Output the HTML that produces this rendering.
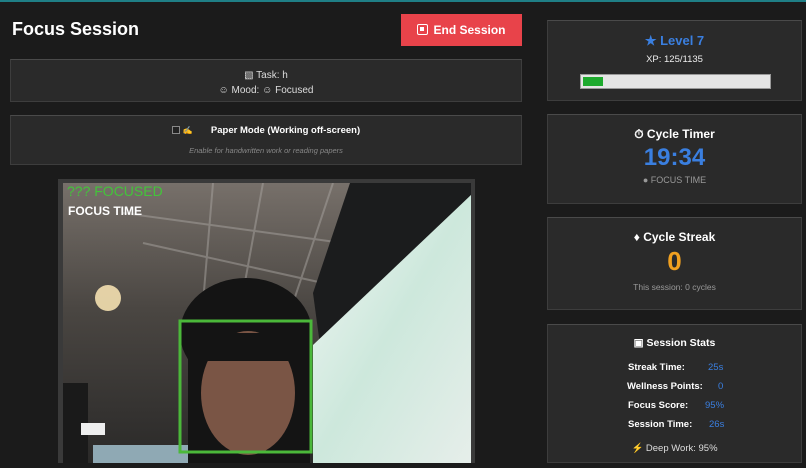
<!DOCTYPE html>
<html><head><style>
*{margin:0;padding:0;box-sizing:border-box}
body{width:806px;height:463px;background:#1b1b1b;font-family:"Liberation Sans",sans-serif;color:#fff;position:relative;overflow:hidden}
.top{position:absolute;left:0;top:0;width:806px;height:2px;background:#1f7f86}
.card{position:absolute;background:#2a2a2a;border:1px solid #3d3d3d;border-top-color:#4a4a4a;text-align:center}
h1{position:absolute;left:12px;top:19px;font-size:18px;font-weight:bold}
.btn{position:absolute;left:401px;top:14px;width:121px;height:32px;background:#e8434a;font-size:12px;font-weight:bold;text-align:center;line-height:32px}
.btn i{display:inline-block;width:11px;height:11px;border:1.5px solid #fff;border-radius:2px;vertical-align:-1px;margin-right:5px;position:relative}
.btn i:after{content:"";position:absolute;left:2px;top:2px;width:4px;height:4px;background:#fff}
.sm{font-size:10px;color:#ddd}
.blue{color:#3a7fe0}
.row{position:absolute;font-size:9.5px;font-weight:bold;left:0;width:100%}
.row span{position:absolute}
</style></head><body>
<div class="top"></div>
<h1>Focus Session</h1>
<div class="btn"><i></i>End Session</div>
<div class="card" style="left:10px;top:59px;width:512px;height:43px"><div class="sm" style="margin-top:8px;line-height:15px">▧ Task: h<br>☺ Mood: ☺ Focused</div></div>
<div class="card" style="left:10px;top:115px;width:512px;height:50px">
<div style="margin-top:9px;font-size:9.5px;font-weight:bold"><span style="display:inline-block;width:8px;height:8px;border:1px solid #888;background:#222;vertical-align:-1px"></span> <span style="font-size:8px">✍</span>&nbsp;&nbsp;&nbsp;&nbsp;&nbsp;&nbsp;&nbsp;Paper Mode (Working off-screen)</div>
<div style="margin-top:10px;font-size:7.5px;font-style:italic;color:#888">Enable for handwritten work or reading papers</div></div>
<div style="position:absolute;left:58px;top:179px;width:417px;height:284px;background:#3a3a3a;padding:4px 4px 0 5px">
<svg width="408" height="280" viewBox="0 0 408 280">
<defs><linearGradient id="c" x1="0" y1="0" x2="0" y2="1"><stop offset="0" stop-color="#77706a"/><stop offset="0.45" stop-color="#4a4642"/><stop offset="1" stop-color="#2a2928"/></linearGradient>
<linearGradient id="m" x1="0" y1="0" x2="1" y2="1"><stop offset="0" stop-color="#f2f6f4"/><stop offset="0.5" stop-color="#cde8dc"/><stop offset="1" stop-color="#e6eeea"/></linearGradient></defs>
<rect width="408" height="280" fill="url(#c)"/>
<g stroke="#a8a4a0" stroke-width="2" opacity="0.5"><line x1="150" y1="0" x2="140" y2="120"/><line x1="200" y1="0" x2="180" y2="110"/><line x1="60" y1="30" x2="280" y2="60"/><line x1="80" y1="60" x2="260" y2="100"/><line x1="270" y1="0" x2="230" y2="120"/></g>
<polygon points="287,0 408,0 408,12 257,162 250,110" fill="#1b1c1d"/>
<polygon points="408,12 408,280 250,280 250,162" fill="url(#m)"/>
<circle cx="45" cy="115" r="13" fill="#f4e0b0" opacity="0.9"/>
<rect x="0" y="200" width="25" height="80" fill="#1a1a1a"/>
<rect x="18" y="240" width="24" height="12" fill="#eee"/>
<rect x="30" y="262" width="95" height="18" fill="#8fa9b4"/>
<ellipse cx="183" cy="150" rx="66" ry="55" fill="#141414"/>
<rect x="125" y="145" width="122" height="135" fill="#141414"/>
<ellipse cx="185" cy="210" rx="47" ry="62" fill="#7a5545"/>
<rect x="130" y="150" width="110" height="28" fill="#141414"/>
<rect x="117" y="138" width="131" height="131" fill="none" stroke="#4bb83a" stroke-width="3"/>
<text x="4" y="13" font-family="Liberation Sans" font-size="14" fill="#43c43a">??? FOCUSED</text>
<text x="5" y="32" font-family="Liberation Sans" font-size="12" font-weight="bold" fill="#fff">FOCUS TIME</text>
</svg></div>
<div class="card" style="left:547px;top:20px;width:255px;height:81px">
<div class="blue" style="margin-top:12px;font-size:13px;font-weight:bold">★ Level 7</div>
<div style="margin-top:5px;font-size:9.5px;color:#eee">XP: 125/1135</div>
<div style="position:absolute;left:32px;top:53px;width:191px;height:15px;background:#e5e5e5;border:1px solid #999"><div style="margin:2px;width:20px;height:9px;background:#1eaa2e"></div></div></div>
<div class="card" style="left:547px;top:114px;width:255px;height:90px">
<div style="margin-top:12px;font-size:12px;font-weight:bold">⏱ Cycle Timer</div>
<div class="blue" style="margin-top:2px;font-size:24px;font-weight:bold">19:34</div>
<div style="margin-top:3px;font-size:9px;color:#999">● FOCUS TIME</div></div>
<div class="card" style="left:547px;top:217px;width:255px;height:93px">
<div style="margin-top:12px;font-size:12px;font-weight:bold">♦ Cycle Streak</div>
<div style="margin-top:2px;font-size:26px;font-weight:bold;color:#f0a020">0</div>
<div style="margin-top:5px;font-size:8.5px;color:#999">This session: 0 cycles</div></div>
<div class="card" style="left:547px;top:324px;width:255px;height:139px">
<div style="margin-top:12px;font-size:10.5px;font-weight:bold">▣ Session Stats</div>
<div class="row" style="top:37px"><span style="left:80px">Streak Time:</span><span class="blue" style="left:160px;font-weight:normal">25s</span></div>
<div class="row" style="top:56px"><span style="left:79px">Wellness Points:</span><span class="blue" style="left:170px;font-weight:normal">0</span></div>
<div class="row" style="top:75px"><span style="left:80px">Focus Score:</span><span class="blue" style="left:157px;font-weight:normal">95%</span></div>
<div class="row" style="top:94px"><span style="left:80px">Session Time:</span><span class="blue" style="left:161px;font-weight:normal">26s</span></div>
<div style="position:absolute;top:118px;width:100%;font-size:9.5px;color:#ddd">⚡ Deep Work: 95%</div></div>
</body></html>
